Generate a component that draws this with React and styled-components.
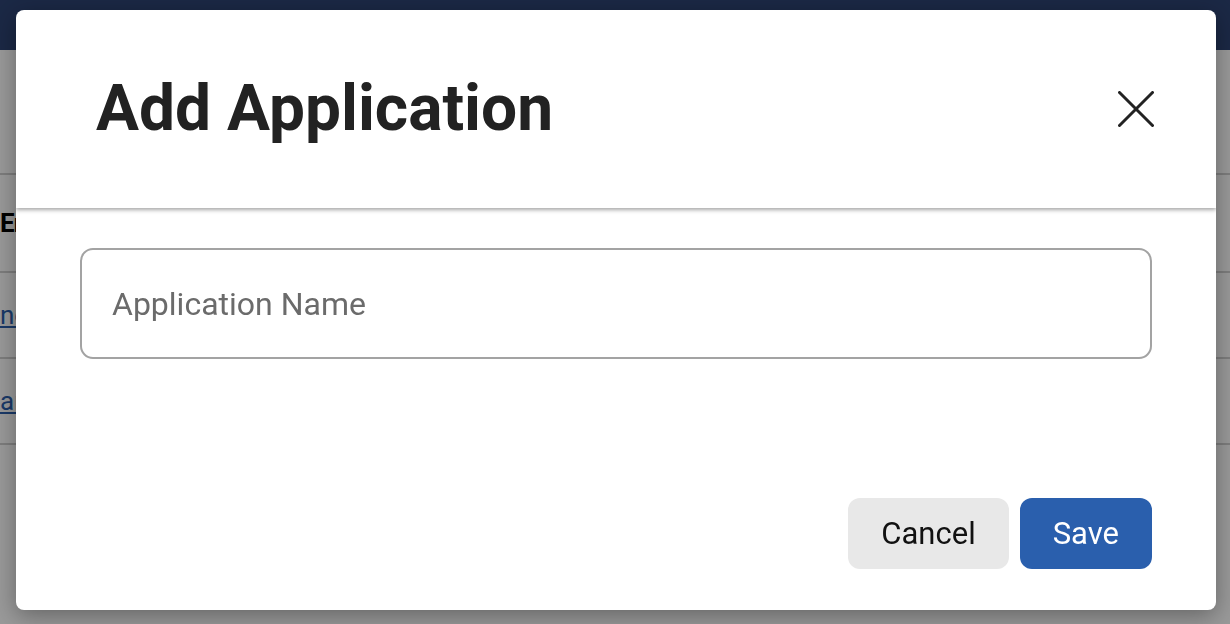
import React from "react";
import styled, { createGlobalStyle } from "styled-components";

const Global = createGlobalStyle`
  html, body { margin: 0; padding: 0; }
  body {
    font-family: Roboto, "Noto Sans", "Liberation Sans", sans-serif;
    background: #ffffff;
    width: 1230px;
    height: 624px;
    overflow: hidden;
  }
`;

const Page = styled.div`
  width: 1230px;
  height: 624px;
  display: flex;
  flex-direction: column;
`;

const TopBar = styled.header`
  height: 50px;
  background: #2d4373;
  flex: none;
`;

const Table = styled.div`
  display: flex;
  flex-direction: column;
  margin-top: 123px;
  border-top: 2px solid #d0d0d0;
`;

const Row = styled.div`
  height: ${(p) => p.$h}px;
  display: flex;
  align-items: center;
  border-bottom: 2px solid #d0d0d0;
`;

const HeadCell = styled.span`
  font-size: 26px;
  font-weight: 700;
  color: #000;
  letter-spacing: -1px;
`;

const LinkCell = styled.a`
  font-size: 26px;
  color: #2b5fad;
  text-decoration: underline;
`;

const Overlay = styled.div`
  position: fixed;
  inset: 0;
  background: rgba(0, 0, 0, 0.4);
`;

const Modal = styled.div`
  position: fixed;
  top: 10px;
  left: 16px;
  width: 1200px;
  height: 600px;
  background: #fff;
  border-radius: 8px;
  box-shadow: 0 6px 24px rgba(0, 0, 0, 0.35);
  display: flex;
  flex-direction: column;
  overflow: hidden;
`;

const Header = styled.div`
  height: 198px;
  flex: none;
  display: flex;
  align-items: center;
  justify-content: space-between;
  padding: 0 62px 0 80px;
  box-shadow: 0 2px 4px rgba(0, 0, 0, 0.35);
  position: relative;
  z-index: 1;
`;

const Title = styled.h2`
  margin: 0;
  font-size: 64px;
  font-weight: 700;
  color: #222;
  line-height: 1;
`;

const CloseButton = styled.button`
  width: 36px;
  height: 36px;
  padding: 0;
  border: none;
  background: none;
  display: flex;
  align-items: center;
  justify-content: center;
  cursor: pointer;
`;

const Body = styled.div`
  flex: 1;
  padding: 40px 64px 0;
`;

const Input = styled.input`
  box-sizing: border-box;
  width: 100%;
  height: 111px;
  border: 2px solid #a3a3a3;
  border-radius: 13px;
  padding: 0 30px;
  font-family: inherit;
  font-size: 32px;
  color: #222;
  outline: none;
  &::placeholder {
    color: #6b6b6b;
  }
`;

const Footer = styled.div`
  display: flex;
  justify-content: flex-end;
  gap: 11px;
  padding: 0 64px 41px;
`;

const Button = styled.button`
  height: 71px;
  padding: 0 33px;
  border: none;
  border-radius: 12px;
  font-family: inherit;
  font-size: 31px;
  background: ${(p) => (p.$primary ? "#2a5fad" : "#e8e8e8")};
  color: ${(p) => (p.$primary ? "#fff" : "#111")};
  cursor: pointer;
`;

const CloseIcon = () => (
  <svg width="36" height="36" viewBox="0 0 36 36" fill="none">
    <path d="M1.5 1.5 L34.5 34.5 M34.5 1.5 L1.5 34.5" stroke="#222" strokeWidth="3" strokeLinecap="round" />
  </svg>
);

export default function App() {
  return (
    <>
      <Global />
      <Page>
        <TopBar />
        <Table>
          <Row $h={96}>
            <HeadCell>Environment</HeadCell>
          </Row>
          <Row $h={84}>
            <LinkCell>network</LinkCell>
          </Row>
          <Row $h={84}>
            <LinkCell>archive</LinkCell>
          </Row>
        </Table>
      </Page>
      <Overlay />
      <Modal role="dialog">
        <Header>
          <Title>Add Application</Title>
          <CloseButton aria-label="Close">
            <CloseIcon />
          </CloseButton>
        </Header>
        <Body>
          <Input placeholder="Application Name" />
        </Body>
        <Footer>
          <Button>Cancel</Button>
          <Button $primary>Save</Button>
        </Footer>
      </Modal>
    </>
  );
}
